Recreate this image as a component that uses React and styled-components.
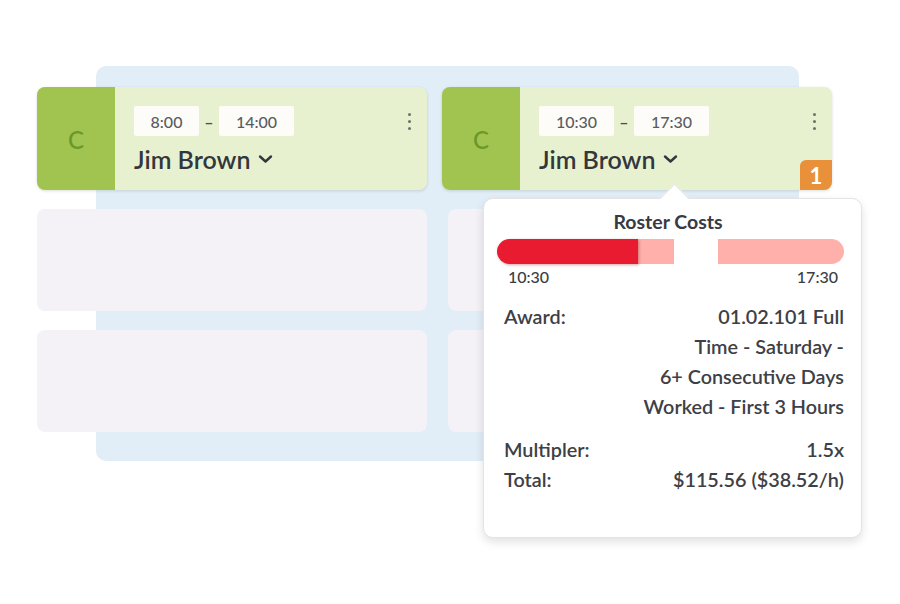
import React from "react";
import styled, { createGlobalStyle } from "styled-components";

const Global = createGlobalStyle`
  html, body { margin: 0; padding: 0; background: #ffffff; }
  body { font-family: Lato, "Noto Sans", sans-serif; }
  * { box-sizing: border-box; }
`;

const Stage = styled.div`
  position: relative;
  width: 900px;
  height: 604px;
  overflow: hidden;
  display: grid;
  grid-template-columns: 1fr;
  grid-template-rows: 1fr;
  background: #ffffff;
`;

const Backdrop = styled.div`
  grid-area: 1 / 1;
  margin: 66px 0 0 96px;
  width: 703px;
  height: 395px;
  background: #e1edf7;
  border-radius: 10px;
`;

const Board = styled.div`
  grid-area: 1 / 1;
  align-self: start;
  justify-self: start;
  margin: 87px 0 0 37px;
  display: grid;
  grid-template-columns: 390px 390px;
  grid-template-rows: 103px 102px 102px;
  column-gap: 15px;
  row-gap: 19px;
`;

const Card = styled.div`
  position: relative;
  display: flex;
  border-radius: 8px;
  overflow: hidden;
  background: #e8f1cf;
  box-shadow: 0 1px 3px rgba(60, 80, 40, 0.18);
`;

const Role = styled.div`
  width: 78px;
  flex: none;
  background: #a1c450;
  display: flex;
  align-items: center;
  justify-content: center;
  color: #6b9829;
  font-size: 24px;
  font-weight: 500;
  padding-top: 2px;
`;

const CardBody = styled.div`
  flex: 1;
  display: flex;
  flex-direction: column;
  padding: 19px 0 0 19px;
`;

const TimeRow = styled.div`
  display: flex;
  align-items: center;
  height: 30px;
`;

const Pill = styled.div`
  height: 30px;
  min-width: ${(p) => p.$w}px;
  display: flex;
  align-items: center;
  justify-content: center;
  background: #fdfcf8;
  border-radius: 2px;
  color: #595c62;
  font-size: 16px;
  font-weight: 500;
`;

const Dash = styled.span`
  width: 20px;
  text-align: center;
  color: #4d5056;
  font-size: 16px;
  font-weight: 700;
`;

const Name = styled.div`
  margin-top: 8px;
  display: flex;
  align-items: center;
  gap: 8px;
  color: #33373d;
  font-size: 25px;
  font-weight: 600;
`;

const Kebab = styled.div`
  position: absolute;
  top: 26px;
  right: 16px;
  display: flex;
  flex-direction: column;
  gap: 4px;
  & > i {
    width: 3px;
    height: 3px;
    border-radius: 50%;
    background: #707070;
  }
`;

const Badge = styled.div`
  position: absolute;
  right: 0;
  bottom: 0;
  width: 32px;
  height: 30px;
  background: #e8913a;
  border-top-left-radius: 6px;
  color: #ffffff;
  font-size: 22px;
  font-weight: 700;
  display: flex;
  align-items: center;
  justify-content: center;
`;

const Ghost = styled.div`
  background: #f4f2f6;
  border-radius: 8px;
  margin-left: ${(p) => p.$shift || 0}px;
`;

const Popup = styled.div`
  position: absolute;
  left: 483px;
  top: 198px;
  width: 379px;
  height: 340px;
  background: #ffffff;
  border: 1px solid #e4e4e6;
  border-radius: 10px;
  box-shadow: 0 4px 10px rgba(0, 0, 0, 0.12);
  padding: 11px 17px 0 13px;
  color: #3b3e44;
  &::before {
    content: "";
    position: absolute;
    left: 180px;
    top: -11px;
    width: 20px;
    height: 20px;
    background: #ffffff;
    border-left: 1px solid #e4e4e6;
    border-top: 1px solid #e4e4e6;
    transform: rotate(45deg);
  }
`;

const Title = styled.div`
  position: relative;
  text-align: center;
  font-size: 19.5px;
  font-weight: 700;
  line-height: 24px;
  color: #383b42;
  margin-left: -5px;
`;

const Bar = styled.div`
  margin-top: 5px;
  display: flex;
  height: 25px;
`;

const Seg = styled.div`
  height: 25px;
  flex: none;
  width: ${(p) => p.$w}px;
  margin-left: ${(p) => p.$gap || 0}px;
  background: ${(p) => p.$c};
  border-radius: ${(p) => p.$r};
  box-shadow: ${(p) => (p.$shadow ? "1px 1px 3px rgba(120,0,10,0.35)" : "none")};
  position: relative;
  z-index: ${(p) => (p.$shadow ? 1 : 0)};
`;

const BarLabels = styled.div`
  display: flex;
  justify-content: space-between;
  padding: 3px 6px 0 11px;
  font-size: 16px;
  font-weight: 500;
  color: #3a3d44;
  line-height: 20px;
`;

const Details = styled.div`
  margin-top: 14px;
  padding-left: 7px;
  display: grid;
  grid-template-columns: auto 1fr;
  font-size: 19.8px;
  font-weight: 600;
  line-height: 30px;
  color: #3d4046;
`;

const Label = styled.div`
  margin-top: ${(p) => p.$top || 0}px;
`;

const Value = styled.div`
  text-align: right;
  margin-top: ${(p) => p.$top || 0}px;
  & > span { display: block; }
`;

const Chevron = () => (
  <svg width="15" height="10" viewBox="0 0 15 10" fill="none">
    <path d="M2 2.5 L7.5 7.5 L13 2.5" stroke="#33373d" strokeWidth="2.4" strokeLinecap="round" strokeLinejoin="round" />
  </svg>
);

const Shift = ({ start, end, startW, endW, badge }) => (
  <Card>
    <Role>C</Role>
    <CardBody>
      <TimeRow>
        <Pill $w={startW}>{start}</Pill>
        <Dash>–</Dash>
        <Pill $w={endW}>{end}</Pill>
      </TimeRow>
      <Name>
        Jim Brown
        <Chevron />
      </Name>
    </CardBody>
    <Kebab>
      <i />
      <i />
      <i />
    </Kebab>
    {badge && <Badge>{badge}</Badge>}
  </Card>
);

export default function App() {
  return (
    <>
      <Global />
      <Stage>
        <Backdrop />
        <Board>
          <Shift start="8:00" end="14:00" startW={65} endW={75} />
          <Shift start="10:30" end="17:30" startW={75} endW={75} badge="1" />
          <Ghost />
          <Ghost $shift={6} />
          <Ghost />
          <Ghost $shift={6} />
        </Board>
        <Popup>
          <Title>Roster Costs</Title>
          <Bar>
            <Seg $w={141} $c="#e81b31" $r="13px 0 0 13px" $shadow />
            <Seg $w={36} $c="#ffb0ab" $r="0" />
            <Seg $w={126} $gap={44} $c="#ffb0ab" $r="0 13px 13px 0" />
          </Bar>
          <BarLabels>
            <span>10:30</span>
            <span>17:30</span>
          </BarLabels>
          <Details>
            <Label>Award:</Label>
            <Value>
              <span>01.02.101 Full</span>
              <span>Time - Saturday -</span>
              <span>6+ Consecutive Days</span>
              <span>Worked - First 3 Hours</span>
            </Value>
            <Label $top={13}>Multipler:</Label>
            <Value $top={13}>1.5x</Value>
            <Label>Total:</Label>
            <Value>$115.56 ($38.52/h)</Value>
          </Details>
        </Popup>
      </Stage>
    </>
  );
}
